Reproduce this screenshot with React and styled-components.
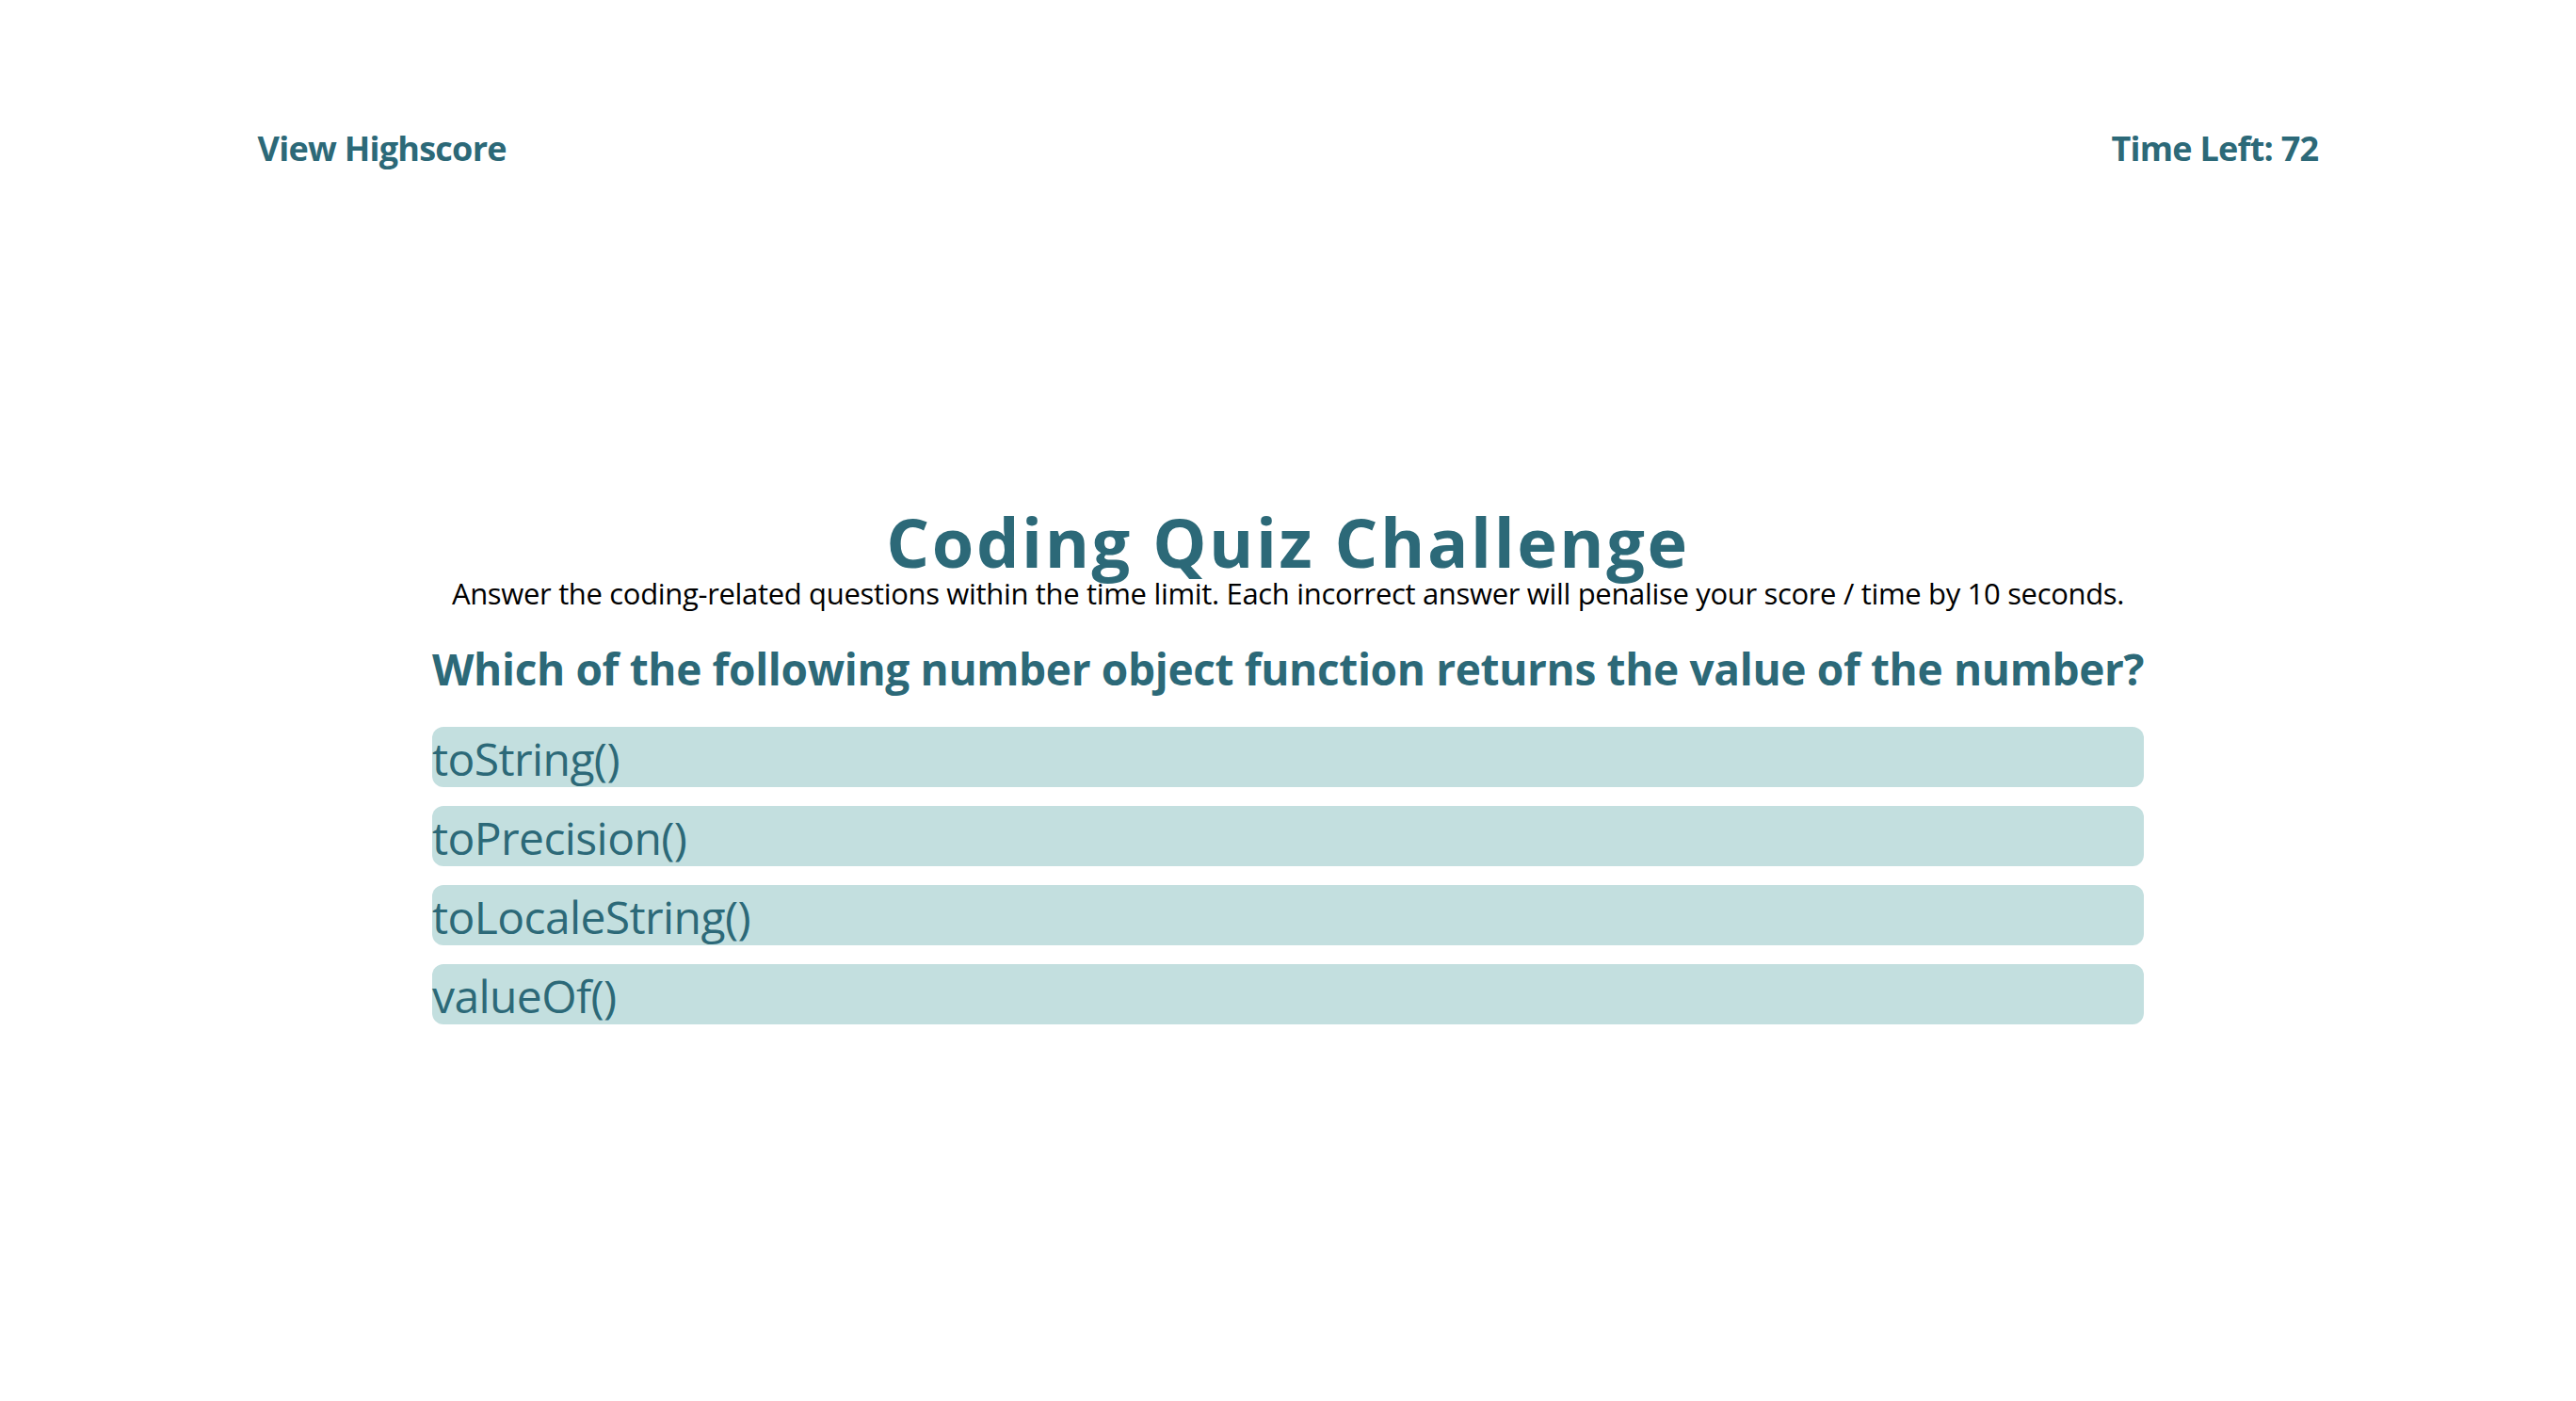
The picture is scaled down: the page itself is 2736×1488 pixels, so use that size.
import React from "react";
import styled, { createGlobalStyle } from "styled-components";

const Global = createGlobalStyle`
  html, body { margin: 0; padding: 0; background: #ffffff; }
  body { font-family: "Open Sans", "Noto Sans", sans-serif; }
`;

const TEAL = "#2c6978";

const Page = styled.div`
  width: 100%;
  min-height: 1488px;
  display: flex;
  flex-direction: column;
`;

const Header = styled.header`
  display: flex;
  justify-content: space-between;
  align-items: center;
  padding: 134px 10% 0;
`;

const HeaderText = styled.span`
  font-size: 36px;
  line-height: 48px;
  font-weight: 700;
  letter-spacing: -0.75px;
  color: ${TEAL};
  cursor: ${(p) => (p.$link ? "pointer" : "default")};
`;

const Main = styled.main`
  width: 1818px;
  margin: 357px auto 0;
  display: flex;
  flex-direction: column;
`;

const Title = styled.h1`
  margin: 0;
  text-align: center;
  font-size: 72px;
  line-height: 72px;
  font-weight: 700;
  letter-spacing: 2.6px;
  color: ${TEAL};
`;

const Subtitle = styled.p`
  margin: -1px 0 0;
  text-align: center;
  font-size: 31px;
  line-height: 40px;
  letter-spacing: -0.33px;
  white-space: nowrap;
  color: #000;
`;

const Question = styled.h2`
  margin: 30px 0 0;
  font-size: 46px;
  line-height: 60px;
  font-weight: 700;
  letter-spacing: -0.35px;
  white-space: nowrap;
  color: ${TEAL};
`;

const Answers = styled.div`
  margin-top: 32px;
  display: flex;
  flex-direction: column;
  gap: 20px;
`;

const Answer = styled.button`
  display: block;
  box-sizing: border-box;
  width: 100%;
  height: 64px;
  padding: 3px 0 0;
  border: none;
  border-radius: 12px;
  background: #c3dfdf;
  color: ${TEAL};
  font-family: inherit;
  font-size: 48px;
  line-height: 61px;
  letter-spacing: -0.6px;
  text-align: left;
  cursor: pointer;
`;

const answers = ["toString()", "toPrecision()", "toLocaleString()", "valueOf()"];

export default function App() {
  return (
    <Page>
      <Global />
      <Header>
        <HeaderText $link>View Highscore</HeaderText>
        <HeaderText>Time Left: 72</HeaderText>
      </Header>
      <Main>
        <Title>Coding Quiz Challenge</Title>
        <Subtitle>
          Answer the coding-related questions within the time limit. Each incorrect answer will penalise your score / time by 10 seconds.
        </Subtitle>
        <Question>Which of the following number object function returns the value of the number?</Question>
        <Answers>
          {answers.map((a) => (
            <Answer key={a}>{a}</Answer>
          ))}
        </Answers>
      </Main>
    </Page>
  );
}
